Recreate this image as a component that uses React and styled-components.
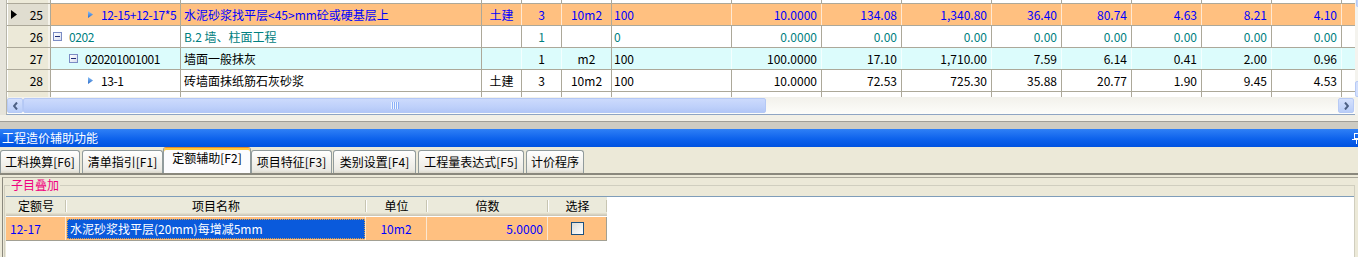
import React from 'react';
import styled, { createGlobalStyle } from 'styled-components';

const GlobalStyle = createGlobalStyle`
  html, body { margin: 0; padding: 0; }
  body {
    width: 1358px;
    height: 257px;
    overflow: hidden;
    background: #ECE9D8;
    font-family: "Noto Sans CJK SC", "Liberation Sans", sans-serif;
    font-size: 12px;
    color: #000;
  }
`;

const Screen = styled.div`
  width: 1358px;
  height: 257px;
  overflow: hidden;
  display: flex;
  flex-direction: column;
`;

/* ---------- top grid ---------- */

const TopPane = styled.div`
  flex: none;
  height: 115px;
  width: 1358px;
  overflow: hidden;
  display: flex;
  padding-left: 6px;
  box-sizing: border-box;
  background: #E6E4DB;
`;

const GridBox = styled.div`
  flex: none;
  width: 1349px;
  height: 115px;
  box-sizing: border-box;
  border-left: 1px solid #B8B6AA;
  border-bottom: 1px solid #8FA5C3;
  display: flex;
  flex-direction: column;
  background: #fff;
`;

const RowsView = styled.div`
  height: 97px;
  overflow: hidden;
`;

const Row = styled.div`
  display: flex;
  height: ${p => p.$h || 22}px;
  box-sizing: border-box;
  border-bottom: ${p => (p.$last ? 'none' : '1px solid #ACA899')};
  background: ${p => p.$bg || '#fff'};
  color: ${p => p.$color || '#000'};
  line-height: 21px;
`;

const RowHead = styled.div`
  flex: none;
  width: 44px;
  box-sizing: border-box;
  display: flex;
  align-items: center;
  padding: 0 7px 0 4px;
  background: ${p => (p.$active ? '#E0DDD0' : '#ECE9D8')};
  border-right: 1px solid #ACA899;
  box-shadow: inset 1px 0 0 #FFFFFF, inset -2px 0 0 #F4F2EA;
  color: #000;
`;

const RowNo = styled.span`
  margin-left: auto;
`;

const Cell = styled.div`
  flex: ${p => (p.$fill ? '1' : 'none')};
  width: ${p => (p.$fill ? 'auto' : `${p.$w}px`)};
  box-sizing: border-box;
  padding: ${p => (p.$align === 'right' ? '0 4px 0 0' : p.$align === 'center' ? '0' : `0 0 0 ${p.$pad ?? 2}px`)};
  text-align: ${p => p.$align || 'left'};
  border-right: ${p => (p.$fill ? 'none' : `1px solid ${p.$line || '#ACA899'}`)};
  white-space: nowrap;
  overflow: hidden;
`;

const CodeCell = styled.div`
  flex: none;
  width: 130px;
  box-sizing: border-box;
  display: flex;
  align-items: center;
  padding-left: ${p => 2 + p.$level * 16}px;
  border-right: 1px solid #ACA899;
  white-space: nowrap;
  overflow: hidden;
  letter-spacing: -0.4px;
`;

const IconSlot = styled.span`
  flex: none;
  width: 11px;
  margin-right: 5px;
  display: flex;
  align-items: center;
  justify-content: ${p => (p.$center ? 'center' : 'flex-start')};
`;

const MinusBox = styled.span`
  width: 9px;
  height: 9px;
  box-sizing: border-box;
  border: 1px solid #7B8CC4;
  background: linear-gradient(135deg, #FFFFFF, #D9DEEF);
  display: flex;
  align-items: center;
  justify-content: center;
  &::before {
    content: '';
    width: 5px;
    height: 1px;
    background: #1F2F78;
  }
`;

const LeafArrow = () => (
  <svg width="5" height="7" viewBox="0 0 5 7">
    <defs>
      <linearGradient id="leafg" x1="0" y1="0" x2="0" y2="1">
        <stop offset="0" stopColor="#8EC4FA" />
        <stop offset="1" stopColor="#2869C8" />
      </linearGradient>
    </defs>
    <polygon points="0,0 5,3.5 0,7" fill="url(#leafg)" />
  </svg>
);

const RowMark = () => (
  <svg width="6" height="9" viewBox="0 0 6 9">
    <polygon points="0,0 6,4.5 0,9" fill="#000" />
  </svg>
);

/* ---------- scrollbars ---------- */

const HScroll = styled.div`
  height: 17px;
  display: flex;
  align-items: center;
  background: linear-gradient(#F2F1EB, #FDFDFA);
`;

const ScrollBtn = styled.div`
  flex: none;
  width: 16px;
  height: 15px;
  box-sizing: border-box;
  border: 1px solid #B7CAF5;
  border-radius: 2px;
  background: linear-gradient(#D5E1FD, #B9CDF8);
  display: flex;
  align-items: center;
  justify-content: center;
  margin-right: ${p => (p.$right ? '1px' : '0')};
`;

const Thumb = styled.div`
  flex: none;
  width: ${p => p.$w}px;
  height: 15px;
  box-sizing: border-box;
  border: 1px solid #B4C8F5;
  border-radius: 2px;
  background: linear-gradient(#CCDAFC, #BED0FA 60%, #B3C7F6);
  display: flex;
  align-items: center;
  justify-content: center;
`;

const Track = styled.div`
  flex: 1;
`;

const VScroll = styled.div`
  flex: none;
  width: 17px;
  height: 115px;
  display: flex;
  flex-direction: column;
  background: #F4F3EE;
`;

const VThumbEnd = styled.div`
  height: 6px;
  margin: 0 1px;
  border: 1px solid #B4C8F5;
  border-top: none;
  border-radius: 0 0 2px 2px;
  background: #C4D5FB;
`;

const VDown = styled.div`
  margin-top: auto;
  height: 16px;
  margin-bottom: 18px;
  box-sizing: border-box;
  border: 1px solid #B7CAF5;
  border-radius: 2px;
  background: linear-gradient(90deg, #D5E1FD, #B9CDF8);
`;

const Chevron = ({ dir }) => (
  <svg width="5" height="8" viewBox="0 0 5 8">
    <polyline
      points={dir === 'left' ? '4,0.5 1,4 4,7.5' : '1,0.5 4,4 1,7.5'}
      fill="none"
      stroke="#4D6185"
      strokeWidth="2"
    />
  </svg>
);

const Grip = () => (
  <svg width="8" height="7" viewBox="0 0 8 7">
    {[0, 2, 4, 6].map(x => (
      <rect key={x} x={x} y="0" width="1" height="7" fill="#EEF4FE" />
    ))}
    {[1, 3, 5, 7].map(x => (
      <rect key={x} x={x} y="0" width="1" height="7" fill="#8CB0F8" />
    ))}
  </svg>
);

/* ---------- splitter, title, tabs ---------- */

const Gap = styled.div`
  flex: none;
  height: 6px;
  background: #F2F0E7;
`;

const Splitter = styled.div`
  flex: none;
  height: 8px;
  box-sizing: border-box;
  border-top: 1px solid #A09F98;
  background: #CDCBC2;
`;

const TitleBar = styled.div`
  flex: none;
  height: 18px;
  display: flex;
  align-items: center;
  justify-content: space-between;
  padding-left: 2px;
  background: linear-gradient(#2F80F6, #0D62EC 55%, #0052E0);
  color: #fff;
  line-height: 18px;
  overflow: hidden;
`;

const Pin = () => (
  <svg width="10" height="11" viewBox="0 0 10 11" style={{ marginRight: -4 }}>
    <rect x="2.5" y="0.5" width="5" height="5" fill="none" stroke="#fff" />
    <rect x="0" y="6" width="10" height="1" fill="#fff" />
    <rect x="4" y="7" width="1" height="4" fill="#fff" />
  </svg>
);

const TabStrip = styled.div`
  flex: none;
  height: 26px;
  display: flex;
  align-items: flex-end;
  background: #ECE9D8;
`;

const Tab = styled.div`
  flex: none;
  width: ${p => p.$w}px;
  margin-left: ${p => p.$ml || 0}px;
  height: ${p => (p.$active ? 26 : 23)}px;
  box-sizing: border-box;
  border: 1px solid #919B9C;
  border-bottom: none;
  border-radius: 3px 3px 0 0;
  text-align: center;
  white-space: nowrap;
  line-height: ${p => (p.$active ? 20 : 21)}px;
  background: ${p =>
    p.$active ? '#FCFCFE' : 'linear-gradient(#FFFFFF, #F6F5F1 40%, #ECEBE5 85%, #DCD9CC)'};
  box-shadow: ${p => (p.$active ? 'inset 0 2px 0 #FFC83C' : 'none')};
  border-top-color: ${p => (p.$active ? '#E68B2C' : '#919B9C')};
`;

/* ---------- lower panel ---------- */

const Panel = styled.div`
  flex: 1;
  display: flex;
  flex-direction: column;
  border-top: 2px solid #8A887D;
`;

const PanelBody = styled.div`
  flex: 1;
  margin-top: 2px;
  margin-left: 2px;
  border-top: 1px solid #A9A699;
  border-left: 1px solid #8A887D;
  display: flex;
  flex-direction: column;
`;

const Group = styled.fieldset`
  margin: 0 3px 0 1px;
  padding: 4px 0 0 1px;
  border: 1px solid #D0CEBF;
  border-bottom: none;
  min-width: 0;
`;

const GroupLabel = styled.legend`
  margin-left: 4px;
  padding: 0 1px;
  line-height: 14px;
  color: #F0007F;
`;

const SubGrid = styled.div`
  height: 70px;
  background: #fff;
  border-top: 1px solid #7F9DB9;
`;

const HeadRow = styled.div`
  display: flex;
  width: 601px;
  height: 19px;
  background: #EBEADB;
  box-shadow: inset 0 -1px 0 #CBC7B8, inset 0 -2px 0 #D6D2C2, inset 0 -3px 0 #E2DECD;
`;

const HeadCell = styled.div`
  flex: none;
  position: relative;
  width: ${p => p.$w}px;
  text-align: center;
  line-height: 18px;
  &::after {
    content: '';
    position: absolute;
    right: 0;
    top: 3px;
    bottom: 4px;
    width: 1px;
    background: #C7C5B2;
    box-shadow: 1px 0 0 #FFFFFF;
  }
`;

const DataRow = styled.div`
  display: flex;
  width: 601px;
  height: 24px;
  margin-top: 1px;
  box-sizing: border-box;
  background: #FFC080;
  border-bottom: 1px solid #A2A093;
  border-right: 1px solid #A2A093;
  color: #0000FF;
  line-height: 22px;
`;

const DataCell = styled.div`
  flex: none;
  width: ${p => p.$w}px;
  box-sizing: border-box;
  display: flex;
  align-items: center;
  justify-content: ${p => p.$justify || 'flex-start'};
  padding: ${p => p.$pad || '0'};
  border-right: ${p => (p.$last ? 'none' : '1px solid #FBE7D2')};
  white-space: nowrap;
`;

const SelBox = styled.div`
  flex: 1;
  align-self: stretch;
  margin: 2px 0 1px 1px;
  padding-left: 2px;
  box-sizing: border-box;
  background: #0A5ADC;
  border: 1px dotted #D8A050;
  color: #fff;
  line-height: 18px;
`;

const Check = styled.span`
  width: 13px;
  height: 13px;
  box-sizing: border-box;
  border: 1px solid #1C5180;
  background: linear-gradient(135deg, #DCDCD7, #FFFFFF);
`;

/* ---------- data ---------- */

const NUM_W = [90, 80, 90, 70, 70, 70, 70, 70];

const ROWS = [
  {
    no: 25, active: true, bg: '#FFC080', color: '#0000FF', light: '#FFE9D3', level: 2, icon: 'leaf',
    code: '12-15+12-17*5', name: '水泥砂浆找平层<45>mm砼或硬基层上', zy: '土建', sl: '3', dw: '10m2', gs: '100',
    vals: ['10.0000', '134.08', '1,340.80', '36.40', '80.74', '4.63', '8.21', '4.10'],
  },
  {
    no: 26, bg: '#FFFFFF', color: '#008080', level: 0, icon: 'minus',
    code: '0202', name: 'B.2 墙、柱面工程', zy: '', sl: '1', dw: '', gs: '0',
    vals: ['0.0000', '0.00', '0.00', '0.00', '0.00', '0.00', '0.00', '0.00'],
  },
  {
    no: 27, bg: '#DCFCFC', color: '#000', light: '#F3FEFE', level: 1, icon: 'minus',
    code: '020201001001', name: '墙面一般抹灰', zy: '', sl: '1', dw: 'm2', gs: '100',
    vals: ['100.0000', '17.10', '1,710.00', '7.59', '6.14', '0.41', '2.00', '0.96'],
  },
  {
    no: 28, bg: '#FFFFFF', color: '#000', level: 2, icon: 'leaf',
    code: '13-1', name: '砖墙面抹纸筋石灰砂浆', zy: '土建', sl: '3', dw: '10m2', gs: '100',
    vals: ['10.0000', '72.53', '725.30', '35.88', '20.77', '1.90', '9.45', '4.53'],
  },
];

const TABS = [
  { label: '工料换算[F6]', w: 80 },
  { label: '清单指引[F1]', w: 81, ml: 2 },
  { label: '定额辅助[F2]', w: 88, active: true },
  { label: '项目特征[F3]', w: 81 },
  { label: '类别设置[F4]', w: 83, ml: 1 },
  { label: '工程量表达式[F5]', w: 106, ml: 2 },
  { label: '计价程序', w: 58, ml: 2 },
];

const SUB_COLS = [
  { label: '定额号', w: 60 },
  { label: '项目名称', w: 300 },
  { label: '单位', w: 61 },
  { label: '倍数', w: 121 },
  { label: '选择', w: 59 },
];

function BlankRow({ h, last }) {
  return (
    <Row $h={h} $last={last}>
      <RowHead />
      <Cell $w={130} />
      <Cell $w={301} />
      <Cell $w={40} />
      <Cell $w={40} />
      <Cell $w={50} />
      <Cell $w={120} />
      {NUM_W.map((w, i) => (
        <Cell key={i} $w={w} />
      ))}
      <Cell $fill />
    </Row>
  );
}

function DataLine({ r }) {
  const soft = r.light || '#ACA899';
  return (
    <Row $bg={r.bg} $color={r.color}>
      <RowHead $active={r.active}>
        {r.active && <RowMark />}
        <RowNo>{r.no}</RowNo>
      </RowHead>
      <CodeCell $level={r.level}>
        <IconSlot $center={r.icon === 'leaf'}>
          {r.icon === 'leaf' ? <LeafArrow /> : <MinusBox />}
        </IconSlot>
        {r.code}
      </CodeCell>
      <Cell $w={301} $pad={3}>{r.name}</Cell>
      <Cell $w={40} $align="center" $line={soft}>{r.zy}</Cell>
      <Cell $w={40} $align="center" $line={soft}>{r.sl}</Cell>
      <Cell $w={50} $align="center">{r.dw}</Cell>
      <Cell $w={120} $line={soft}>{r.gs}</Cell>
      {r.vals.map((v, i) => (
        <Cell key={i} $w={NUM_W[i]} $align="right" $line={soft}>{v}</Cell>
      ))}
      <Cell $fill />
    </Row>
  );
}

export default function App() {
  return (
    <>
      <GlobalStyle />
      <Screen>
        <TopPane>
          <GridBox>
            <RowsView>
              <BlankRow h={4} />
              {ROWS.map(r => (
                <DataLine key={r.no} r={r} />
              ))}
              <BlankRow h={5} last />
            </RowsView>
            <HScroll>
              <ScrollBtn><Chevron dir="left" /></ScrollBtn>
              <Thumb $w={743}><Grip /></Thumb>
              <Track />
              <ScrollBtn $right><Chevron dir="right" /></ScrollBtn>
            </HScroll>
          </GridBox>
          <VScroll>
            <VThumbEnd />
            <VDown />
          </VScroll>
        </TopPane>

        <Gap />
        <Splitter />

        <TitleBar>
          <span>工程造价辅助功能</span>
          <Pin />
        </TitleBar>

        <TabStrip>
          {TABS.map(t => (
            <Tab key={t.label} $w={t.w} $ml={t.ml} $active={t.active}>{t.label}</Tab>
          ))}
        </TabStrip>

        <Panel>
          <PanelBody>
            <Group>
              <GroupLabel>子目叠加</GroupLabel>
              <SubGrid>
                <HeadRow>
                  {SUB_COLS.map(c => (
                    <HeadCell key={c.label} $w={c.w}>{c.label}</HeadCell>
                  ))}
                </HeadRow>
                <DataRow>
                  <DataCell $w={60} $pad="0 0 0 4px">12-17</DataCell>
                  <DataCell $w={300}>
                    <SelBox>水泥砂浆找平层(20mm)每增减5mm</SelBox>
                  </DataCell>
                  <DataCell $w={61} $justify="center">10m2</DataCell>
                  <DataCell $w={121} $justify="flex-end" $pad="0 4px 0 0">5.0000</DataCell>
                  <DataCell $w={59} $justify="center" $last>
                    <Check />
                  </DataCell>
                </DataRow>
              </SubGrid>
            </Group>
          </PanelBody>
        </Panel>
      </Screen>
    </>
  );
}
